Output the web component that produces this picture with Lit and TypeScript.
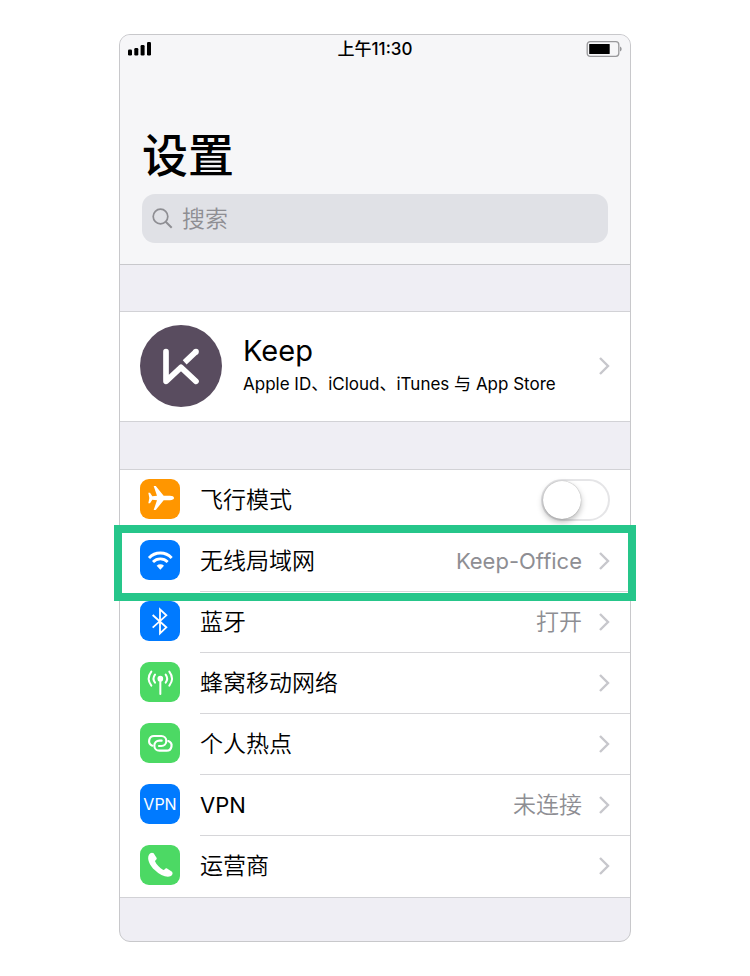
import { LitElement, html, svg, css, nothing } from "lit";
import type { TemplateResult, SVGTemplateResult } from "lit";
import { customElement, property, state } from "lit/decorators.js";
import { classMap } from "lit/directives/class-map.js";

type Tint = "orange" | "blue" | "green";

interface Setting {
  id: string;
  label: string;
  tint: Tint;
  value?: string;
  toggle?: boolean;
  highlighted?: boolean;
}

const SETTINGS: Setting[] = [
  { id: "airplane", label: "飞行模式", tint: "orange", toggle: true },
  { id: "wifi", label: "无线局域网", tint: "blue", value: "Keep-Office", highlighted: true },
  { id: "bluetooth", label: "蓝牙", tint: "blue", value: "打开" },
  { id: "cellular", label: "蜂窝移动网络", tint: "green" },
  { id: "hotspot", label: "个人热点", tint: "green" },
  { id: "vpn", label: "VPN", tint: "blue", value: "未连接" },
  { id: "carrier", label: "运营商", tint: "green" },
];

const isLatin = (text: string) => /^[\x20-\x7e]+$/.test(text);

const GLYPHS: Record<string, SVGTemplateResult> = {
  airplane: svg`<path fill="#fff" d="M102 57c0 4-5 6.500-12 6.500H71L49 91c-1 2-2 2-4 2h-4l10-29.500-14-1-7 10h-5l3-15.500-3-15.500h5l7 10 14-1-10-29.500h4c2 0 3 0 4 2l22 27.500h19c7 0 12 2.500 12 6.500z"/>`,
  wifi: svg`<g fill="none" stroke="#fff" stroke-width="8.500"><path d="M27 54A46 46 0 0 1 95 54"/><path d="M39 66A31 31 0 0 1 83 66"/></g><path fill="#fff" d="M61 89 50 77A16 16 0 0 1 72 77z"/>`,
  bluetooth: svg`<path fill="none" stroke="#fff" stroke-width="5.500" d="M38 42 79 79 60 97V25L79 43 38 80"/>`,
  cellular: svg`<circle cx="61" cy="50" r="8.500" fill="#fff"/><g fill="none" stroke="#fff" stroke-width="6" stroke-linecap="round"><path d="M61 50V96"/><path d="M45 38Q36 50 45 62M77 38Q86 50 77 62M34 29Q18 50 34 71M88 29Q104 50 88 71"/></g>`,
  hotspot: svg`<g fill="none" stroke="#fff" stroke-width="6.500" stroke-linecap="round"><path d="M37 68A15 15 0 0 1 43 39H64A15 15 0 0 1 64 69H57"/><path d="M85 54A15 15 0 0 1 79 83H58A15 15 0 0 1 58 53H65"/></g>`,
  carrier: svg`<path fill="#fff" d="M27 29c3-6 10-8 14-4l9 14c2 4-5 6-5 10 4 10 14 20 25 26 4 0 6-7 10-5l16 10c4 4 1 11-5 14-12 4-31-3-46-18C28 60 20 41 27 29z"/>`,
};

@customElement("settings-row")
class SettingsRow extends LitElement {
  @property({ attribute: false }) item!: Setting;
  @state() private on = false;

  static styles = css`
    :host {
      display: block;
      position: relative;
    }
    .row {
      display: flex;
      align-items: flex-start;
      padding-left: 20px;
      gap: 20px;
      color: #000;
      text-decoration: none;
    }
    .icon {
      flex: none;
      display: grid;
      place-items: center;
      width: 40px;
      height: 40px;
      margin-top: 9px;
      border-radius: 9px;
      color: #fff;
      font-size: 16px;
      line-height: 40px;
    }
    .icon svg {
      display: block;
      width: 40px;
      height: 40px;
    }
    .orange {
      background: #ff9600;
    }
    .blue {
      background: #007aff;
    }
    .green {
      background: #4cd964;
    }
    .body {
      flex: 1;
      display: flex;
      align-items: center;
      min-height: 60px;
      padding-right: 20px;
      border-bottom: 1px solid #d6d6d9;
    }
    :host(:last-of-type) .body {
      border-bottom-color: transparent;
    }
    .label {
      flex: 1;
    }
    .label,
    .value {
      font-weight: 350;
    }
    .value {
      color: #8e8e93;
      margin-right: 17px;
    }
    .latin {
      font-size: 22px;
      font-weight: 400;
    }
    .chevron {
      flex: none;
      display: block;
      width: 11px;
      height: 18px;
    }
    .switch {
      appearance: none;
      flex: none;
      width: 69px;
      height: 42px;
      margin: 0;
      border: 2px solid #e5e5e7;
      border-radius: 21px;
      background: #fff;
      display: flex;
      align-items: center;
    }
    .switch::before {
      content: "";
      width: 38px;
      height: 38px;
      border-radius: 50%;
      background: #fff;
      box-shadow: 0 3px 6px rgba(0, 0, 0, 0.28), 0 0 1px rgba(0, 0, 0, 0.4);
    }
    .switch:checked {
      justify-content: flex-end;
      background: #4cd964;
      border-color: #4cd964;
    }
    .frame {
      position: absolute;
      inset: -6px -6px -9px;
      border: 8px solid #26c68a;
      pointer-events: none;
      z-index: 1;
    }
  `;

  private icon(): TemplateResult {
    const { id, tint } = this.item;
    const classes = classMap({ icon: true, [tint]: true });
    return html`<span class=${classes} aria-hidden="true"
      >${id === "vpn" ? "VPN" : html`<svg viewBox="0 0 120 120">${GLYPHS[id]}</svg>`}</span
    >`;
  }

  private text(kind: "label" | "value", text: string): TemplateResult {
    return html`<span class=${classMap({ [kind]: true, latin: isLatin(text) })}>${text}</span>`;
  }

  render() {
    const { id, label, value, toggle, highlighted } = this.item;
    if (toggle) {
      return html`<label class="row">
        ${this.icon()}
        <span class="body">
          ${this.text("label", label)}
          <input
            class="switch"
            type="checkbox"
            role="switch"
            .checked=${this.on}
            @change=${(e: Event) => (this.on = (e.target as HTMLInputElement).checked)}
          />
        </span>
      </label>`;
    }
    return html`<a class="row" href="#${id}">
        ${this.icon()}
        <span class="body">
          ${this.text("label", label)} ${value ? this.text("value", value) : nothing}
          <svg class="chevron" viewBox="0 0 11 18" aria-hidden="true">
            <path d="M1 1 9 9 1 17" fill="none" stroke="#c7c7cc" stroke-width="2.400" />
          </svg>
        </span>
      </a>
      ${highlighted ? html`<span class="frame"></span>` : nothing}`;
  }
}

@customElement("app-root")
class AppRoot extends LitElement {
  static styles = css`
    :host {
      display: block;
      padding: 34px 16px;
      background: #fff;
      color: #000;
      font-family: Inter, "Noto Sans CJK SC", sans-serif;
      font-size: 23px;
      line-height: 32px;
    }
    .phone {
      box-sizing: border-box;
      max-width: 512px;
      margin: 0 auto;
      border: 1px solid #c8c8cb;
      border-radius: 11px;
      background: #efeef4;
      padding-bottom: 43px;
    }
    .top {
      background: #f6f6f8;
      border-bottom: 1px solid #c8c8cc;
      border-radius: 10px 10px 0 0;
      padding-bottom: 21px;
    }
    .status {
      display: grid;
      grid-template-columns: 1fr auto 1fr;
      align-items: center;
      height: 28px;
      padding: 0 8px;
      font-size: 17px;
      line-height: 28px;
      font-weight: 500;
    }
    .signal,
    .battery {
      display: block;
      height: 16px;
    }
    .signal {
      width: 24px;
    }
    .battery {
      width: 36px;
      justify-self: end;
    }
    .title {
      margin: 60px 22px 7px;
      font-size: 46px;
      line-height: 64px;
      font-weight: 500;
    }
    .search {
      display: flex;
      align-items: center;
      gap: 9px;
      height: 49px;
      margin: 0 22px;
      padding: 0 10px;
      border-radius: 13px;
      background: #e0e1e6;
    }
    .lens {
      flex: none;
      width: 21px;
      height: 21px;
    }
    .field {
      flex: 1;
      min-width: 0;
      padding: 0;
      border: 0;
      outline: 0;
      background: none;
      color: #000;
      font: inherit;
      font-weight: 350;
    }
    .field::placeholder {
      color: #8e8e93;
      opacity: 1;
    }
    .group {
      margin-top: 46px;
      border: solid #d2d2d6;
      border-width: 1px 0;
      background: #fff;
    }
    .group + .group {
      margin-top: 47px;
    }
    .profile {
      display: flex;
      align-items: center;
      gap: 21px;
      padding: 13px 20px 14px;
      color: #000;
      text-decoration: none;
    }
    .avatar {
      flex: none;
      width: 82px;
      height: 82px;
    }
    .who {
      flex: 1;
      min-width: 0;
    }
    .name {
      display: block;
      font-size: 29px;
      line-height: 36px;
    }
    .about {
      display: block;
      font-size: 17px;
      line-height: 30px;
    }
    .chevron {
      flex: none;
      width: 11px;
      height: 18px;
    }
  `;

  render() {
    return html`<main class="phone">
      <header class="top">
        <div class="status">
          <svg class="signal" viewBox="0 0 24 16" aria-hidden="true">
            <rect x="0" y="8.500" width="4" height="6" rx="1.200" />
            <rect x="6.300" y="7" width="4" height="7.500" rx="1.200" />
            <rect x="12.600" y="4" width="4" height="10.500" rx="1.200" />
            <rect x="19" y="1" width="4" height="13.500" rx="1.200" />
          </svg>
          <time>上午11:30</time>
          <svg class="battery" viewBox="0 0 36 16" aria-hidden="true">
            <rect x="1.200" y=".7" width="31.600" height="14.600" rx="3" fill="none" stroke="#98989b" stroke-width="1.300" />
            <rect x="3.200" y="3" width="20.500" height="10" rx=".5" />
            <path d="M34 5.500c2.200 1 2.200 4 0 5z" fill="#98989b" />
          </svg>
        </div>
        <h1 class="title">设置</h1>
        <label class="search">
          <svg class="lens" viewBox="0 0 21 21" aria-hidden="true">
            <g fill="none" stroke="#8e8e93" stroke-width="1.700">
              <circle cx="8.500" cy="8.500" r="7.300" />
              <path d="m13.700 13.700 6 6" stroke-width="2" />
            </g>
          </svg>
          <input class="field" type="search" placeholder="搜索" aria-label="搜索" />
        </label>
      </header>

      <section class="group">
        <a class="profile" href="#account">
          <svg class="avatar" viewBox="0 0 246 246" aria-hidden="true">
            <circle cx="123" cy="123" r="123" fill="#594c5f" />
            <g fill="none" stroke="#fff" stroke-width="17">
              <path d="M78 80V169L123 127 168 169" stroke-linecap="round" stroke-linejoin="round" />
              <path d="M134 112 168 80" />
            </g>
            <circle cx="168" cy="80" r="8.500" fill="#fff" />
          </svg>
          <span class="who">
            <span class="name">Keep</span>
            <span class="about">Apple ID、iCloud、iTunes 与 App Store</span>
          </span>
          <svg class="chevron" viewBox="0 0 11 18" aria-hidden="true">
            <path d="M1 1 9 9 1 17" fill="none" stroke="#c7c7cc" stroke-width="2.400" />
          </svg>
        </a>
      </section>

      <nav class="group">
        ${SETTINGS.map((item) => html`<settings-row .item=${item}></settings-row>`)}
      </nav>
    </main>`;
  }
}
